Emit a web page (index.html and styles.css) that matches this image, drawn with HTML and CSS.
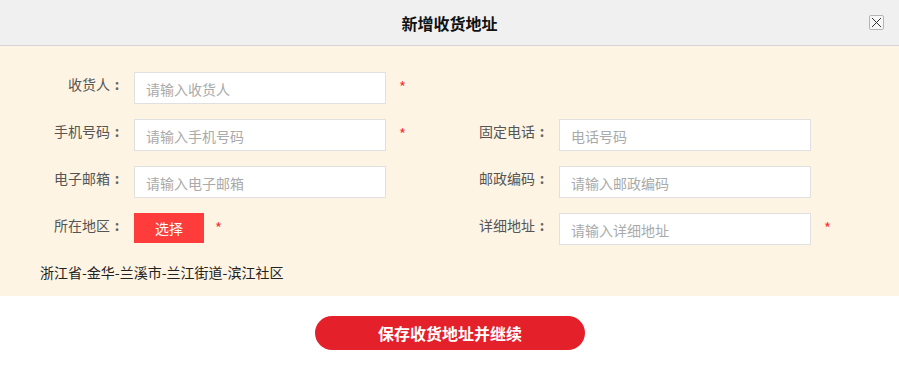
FILE: index.html
```html
<!DOCTYPE html>
<html lang="zh-CN">
<head>
<meta charset="utf-8">
<title>新增收货地址</title>
<link rel="stylesheet" href="styles.css">
</head>
<body>
<div class="dialog">
  <div class="dlg-head">
    <h2 class="dlg-title">新增收货地址</h2>
    <span class="dlg-close"><svg width="11" height="11" viewBox="0 0 11 11"><path d="M1 1L10 10M10 1L1 10" stroke="#333" stroke-width="1" fill="none"/></svg></span>
  </div>
  <div class="dlg-body">
    <div class="form-grid">
      <div class="field">
        <label class="lbl">收货人<span class="colon">:</span></label>
        <input class="inp" placeholder="请输入收货人">
        <span class="req">*</span>
      </div>
      <div class="field"></div>
      <div class="field">
        <label class="lbl">手机号码<span class="colon">:</span></label>
        <input class="inp" placeholder="请输入手机号码">
        <span class="req">*</span>
      </div>
      <div class="field">
        <label class="lbl">固定电话<span class="colon">:</span></label>
        <input class="inp" placeholder="电话号码">
      </div>
      <div class="field">
        <label class="lbl">电子邮箱<span class="colon">:</span></label>
        <input class="inp" placeholder="请输入电子邮箱">
      </div>
      <div class="field">
        <label class="lbl">邮政编码<span class="colon">:</span></label>
        <input class="inp" placeholder="请输入邮政编码">
      </div>
      <div class="field">
        <label class="lbl">所在地区<span class="colon">:</span></label>
        <button class="pick">选择</button>
        <span class="req req-near">*</span>
      </div>
      <div class="field">
        <label class="lbl">详细地址<span class="colon">:</span></label>
        <input class="inp" placeholder="请输入详细地址">
        <span class="req">*</span>
      </div>
    </div>
    <div class="region-text">浙江省-金华-兰溪市-兰江街道-滨江社区</div>
  </div>
  <div class="dlg-foot">
    <button class="save">保存收货地址并继续</button>
  </div>
</div>
</body>
</html>
```

FILE: styles.css
```css
* { box-sizing: border-box; }
html, body { margin: 0; padding: 0; background: #fff; }
body {
  font-family: "Noto Sans CJK SC", "Noto Sans", sans-serif;
  font-size: 14px;
  color: #333;
}
.dialog { width: 899px; }
.dlg-head {
  height: 46px;
  background: #f0f0f0;
  border-bottom: 1px solid #d4d4d4;
  display: flex;
  align-items: center;
  justify-content: center;
  position: relative;
}
.dlg-title {
  margin: 0;
  font-size: 16px;
  font-weight: bold;
  color: #111;
  line-height: 20px;
}
.dlg-close {
  position: absolute;
  right: 15px;
  top: 15px;
  width: 15px;
  height: 15px;
  border: 1px solid #b5b5b5;
  border-radius: 2px;
  background: #f7f7f7;
  display: flex;
  align-items: center;
  justify-content: center;
}
.dlg-close svg { display: block; }
.dlg-body {
  background: #fdf4e4;
  padding: 26px 0 14px 0;
}
.form-grid {
  display: grid;
  grid-template-columns: 425px 425px;
  row-gap: 15px;
  padding-left: 54px;
}
.field {
  display: flex;
  align-items: flex-start;
  height: 32px;
}
.lbl {
  width: 70px;
  text-align: right;
  line-height: 24px;
  color: #555;
  margin-right: 10px;
  white-space: nowrap;
}
.colon {
  display: inline-block;
  width: 14px;
  text-align: center;
  font-weight: bold;
  color: #666;
}
.inp {
  width: 252px;
  height: 32px;
  border: 1px solid #e0e0e0;
  background: #fff;
  padding: 2px 11px 0 11px;
  font: inherit;
  font-size: 14px;
  color: #333;
  outline: none;
}
.inp::placeholder { color: #aaa; }
.req {
  color: #f33;
  margin-left: 13px;
  line-height: 30px;
  font-size: 15px;
}
.req-near { margin-left: 11px; }
.pick {
  width: 70px;
  height: 30px;
  border: 0;
  background: #ff3c3c;
  color: #fff;
  font: inherit;
  font-size: 14px;
  padding: 0;
  cursor: pointer;
}
.region-text {
  padding-left: 40px;
  margin-top: 17px;
  line-height: 20px;
  color: #222;
}
.dlg-foot {
  display: flex;
  justify-content: center;
  padding-top: 20px;
}
.save {
  width: 270px;
  height: 34px;
  border: 0;
  border-radius: 17px;
  background: #e4202b;
  color: #fff;
  font: inherit;
  font-size: 16px;
  font-weight: bold;
  padding: 0;
  margin-left: 1px;
}
```
